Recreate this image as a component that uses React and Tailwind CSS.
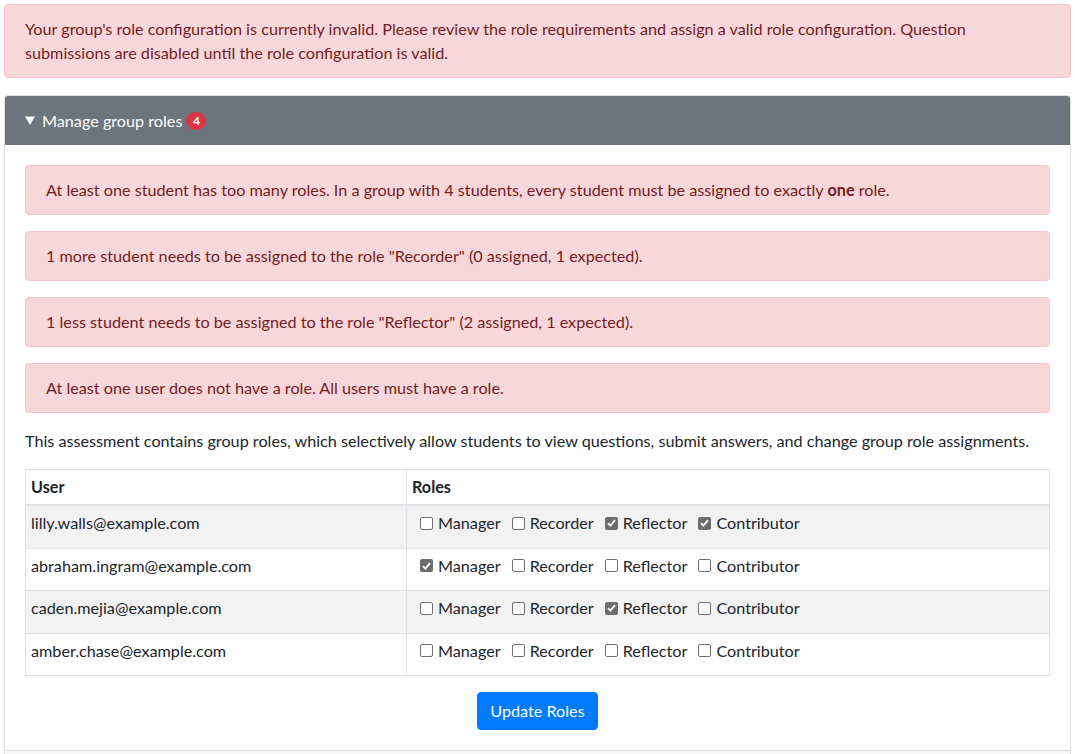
import React from "react";

const users = [
  { email: "lilly.walls@example.com", roles: [false, false, true, true] },
  { email: "abraham.ingram@example.com", roles: [true, false, false, false] },
  { email: "caden.mejia@example.com", roles: [false, false, true, false] },
  { email: "amber.chase@example.com", roles: [false, false, false, false] },
];
const roleNames = ["Manager", "Recorder", "Reflector", "Contributor"];

function Box({ checked }) {
  if (checked) {
    return (
      <span className="inline-flex h-[13px] w-[13px] shrink-0 items-center justify-center rounded-[2px] bg-[#6d6d6d]">
        <svg width="9" height="8" viewBox="0 0 9 8">
          <path d="M1 4.2 L3.4 6.6 L8 1.2" fill="none" stroke="#fff" strokeWidth="1.8" />
        </svg>
      </span>
    );
  }
  return <span className="inline-block h-[13px] w-[13px] shrink-0 rounded-[2px] border border-[#707070] bg-white" />;
}

function Alert({ children, className = "" }) {
  return (
    <div className={"rounded border border-[#f5c6cb] bg-[#f8d7da] px-5 py-3 text-[#721c24] " + className}>
      {children}
    </div>
  );
}

export default function App() {
  return (
    <div className="bg-white p-1 text-[16.2px] leading-6 text-[#212529]" style={{ fontFamily: "Lato, 'Liberation Sans', sans-serif" }}>
      <Alert className="mb-[17px]">
        Your group's role configuration is currently invalid. Please review the role requirements and assign a valid role configuration. Question<br />
        submissions are disabled until the role configuration is valid.
      </Alert>

      <div className="rounded border border-[rgba(0,0,0,0.125)]">
        <div className="flex h-[49px] items-center rounded-t-[3px] bg-[#6c757d] px-5 text-white">
          <svg width="10" height="9" viewBox="0 0 10 9" className="mr-[7px]">
            <path d="M0 0.5 H10 L5 9 Z" fill="#fff" />
          </svg>
          <span>Manage group roles</span>
          <span className="ml-[4px] inline-flex h-[18px] w-[20px] items-center justify-center rounded-full bg-[#dc3545] text-[12px] font-bold leading-none text-white">
            4
          </span>
        </div>
        <div className="p-5">
          <Alert className="mb-4">
            At least one student has too many roles. In a group with 4 students, every student must be assigned to exactly <b>one</b> role.
          </Alert>
          <Alert className="mb-4">1 more student needs to be assigned to the role "Recorder" (0 assigned, 1 expected).</Alert>
          <Alert className="mb-4">1 less student needs to be assigned to the role "Reflector" (2 assigned, 1 expected).</Alert>
          <Alert className="mb-4">At least one user does not have a role. All users must have a role.</Alert>
          <p className="mb-4">
            This assessment contains group roles, which selectively allow students to view questions, submit answers, and change group role assignments.
          </p>
          <table className="w-full border-collapse border border-[#dee2e6]">
            <thead>
              <tr>
                <th className="w-[381px] border border-b-2 border-[#dee2e6] px-[5px] py-[5px] text-left font-bold">User</th>
                <th className="border border-b-2 border-[#dee2e6] px-[5px] py-[5px] text-left font-bold">Roles</th>
              </tr>
            </thead>
            <tbody>
              {users.map((u, i) => (
                <tr key={u.email} className={i % 2 === 0 ? "bg-[#f2f2f2]" : "bg-white"}>
                  <td className="border border-[#dee2e6] px-[5px] pt-[5px] pb-[12.5px] align-top">{u.email}</td>
                  <td className="border border-[#dee2e6] px-[5px] pt-[5px] pb-[12.5px] align-top">
                    <div className="flex items-center pl-[8px]">
                      {roleNames.map((r, j) => (
                        <label key={r} className="mr-[11px] flex items-center">
                          <Box checked={u.roles[j]} />
                          <span className="ml-[5px]">{r}</span>
                        </label>
                      ))}
                    </div>
                  </td>
                </tr>
              ))}
            </tbody>
          </table>
          <div className="mt-4 flex justify-center">
            <button className="rounded border border-[#007bff] bg-[#007bff] px-3 py-1.5 text-white">Update Roles</button>
          </div>
        </div>
        <div className="h-[50px] border-t border-[rgba(0,0,0,0.125)] bg-[#f7f7f7]" />
      </div>
    </div>
  );
}
